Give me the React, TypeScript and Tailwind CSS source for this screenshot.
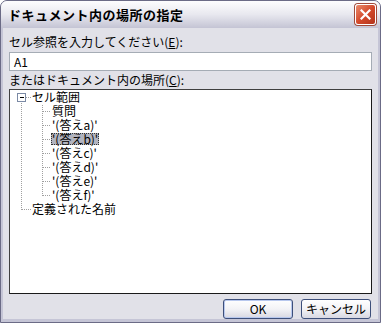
import { useState } from 'react';

const items = ["質問", "'(答えa)'", "'(答えb)'", "'(答えc)'", "'(答えd)'", "'(答えe)'", "'(答えf)'"];

function TreeLines() {
  // dotted connectors, coords relative to tree box inner area
  const dot = { stroke: '#a0a0a0', strokeWidth: 1, strokeDasharray: '1 1' };
  return (
    <svg className="absolute left-0 top-0" width="120" height="130" shapeRendering="crispEdges">
      <line x1="11.5" y1="13" x2="11.5" y2="120" {...dot} />
      <line x1="12" y1="119.5" x2="21" y2="119.5" {...dot} />
      <line x1="16" y1="7.5" x2="21" y2="7.5" {...dot} />
      <line x1="32.5" y1="15" x2="32.5" y2="106" {...dot} />
      {items.map((_, i) => (
        <line key={i} x1="33" y1={21.5 + i * 14} x2="40" y2={21.5 + i * 14} {...dot} />
      ))}
      <rect x="7.5" y="3.5" width="8" height="8" fill="#fff" stroke="#7b8aa5" />
      <line x1="9.5" y1="7.5" x2="14" y2="7.5" stroke="#000" />
    </svg>
  );
}

export default function App() {
  const [selected, setSelected] = useState(2);

  return (
    <div
      className="w-[381px] h-[323px] flex flex-col rounded-t-[7px] bg-[#c5c5d6] border border-[#6b6b86] overflow-hidden text-[12px] text-black"
      style={{ fontFamily: '"MS UI Gothic", "Noto Sans CJK JP", sans-serif' }}
    >
      <div className="h-[28px] flex items-center justify-between pl-[7px] pr-[4px] bg-gradient-to-b from-[#fdfdfe] via-[#e8e8ef] to-[#c4c4d4]">
        <span className="font-bold text-[13px] tracking-[0.5px]">ドキュメント内の場所の指定</span>
        <button className="w-[21px] h-[21px] rounded-[3px] border border-white bg-gradient-to-br from-[#e88a6c] via-[#d44a2c] to-[#b3341c] flex items-center justify-center shadow-[0_0_0_1px_#a04a3a]">
          <svg width="11" height="11" viewBox="0 0 11 11">
            <path d="M1.5 1.5 L9.5 9.5 M9.5 1.5 L1.5 9.5" stroke="#fff" strokeWidth="2.2" strokeLinecap="square" />
          </svg>
        </button>
      </div>

      <div className="flex-1 mx-[2px] mb-[3px] bg-[#e1e1e8] flex flex-col px-[6px] pt-[6px]">
        <div className="leading-[16px]">
          セル参照を入力してください(<span className="underline">E</span>):
        </div>
        <div className="mt-[2px] h-[19px] bg-white border border-[#a5acb5] flex items-center pl-[4px]">A1</div>
        <div className="mt-[1px] leading-[16px]">
          またはドキュメント内の場所(<span className="underline">C</span>):
        </div>
        <div className="mt-[1px] h-[205px] bg-white border border-[#1a1a1a] border-t-[#404040] border-l-[#404040] relative">
          <TreeLines />
          <div className="relative flex flex-col leading-[12px]">
            <div className="h-[14px] flex items-center pl-[22px]">セル範囲</div>
            {items.map((label, i) => (
              <div key={label} className="h-[14px] flex items-center pl-[41px]">
                <span
                  onClick={() => setSelected(i)}
                  className={
                    i === selected
                      ? 'h-[12px] flex items-center px-[1px] bg-[#b2b4bf] outline outline-1 outline-dotted outline-[#333] -outline-offset-1'
                      : 'h-[12px] flex items-center px-[1px]'
                  }
                >
                  {label}
                </span>
              </div>
            ))}
            <div className="h-[14px] flex items-center pl-[22px]">定義された名前</div>
          </div>
        </div>
        <div className="mt-[5px] flex justify-end gap-[8px] pr-[1px]">
          <button className="w-[70px] h-[20px] rounded-[3px] border border-[#3d4f7a] bg-gradient-to-b from-white via-[#f3f3f6] to-[#d8d8e2] shadow-[inset_0_0_0_1px_#b8c8ee] flex items-center justify-center">
            OK
          </button>
          <button className="w-[70px] h-[20px] rounded-[3px] border border-[#3d4f7a] bg-gradient-to-b from-white via-[#f3f3f6] to-[#d8d8e2] flex items-center justify-center">
            キャンセル
          </button>
        </div>
      </div>
    </div>
  );
}
